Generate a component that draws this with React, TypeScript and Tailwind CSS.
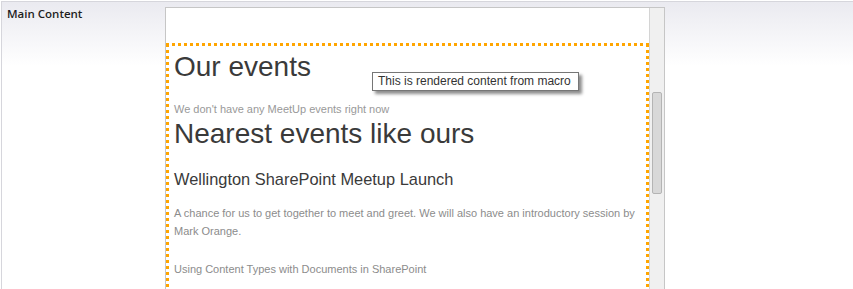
import React from 'react';

const App: React.FC = () => {
  return (
    <div className="relative h-[289px] overflow-hidden bg-white font-['Liberation_Sans',Arial,sans-serif]">
      <div className="mt-[1px] ml-[1px] h-[300px] border-t border-l border-[#d6d6dc] bg-[linear-gradient(to_bottom,#eaeaf0_0px,#ffffff_64px)]">
        <div className="flex items-start">
          {/* Label column */}
          <div className="w-[163px] shrink-0 pl-[5px] pt-[4px] font-['Open_Sans',sans-serif] text-[11.5px] leading-[15px] font-semibold text-[#1e1e1e]">
            Main Content
          </div>

          {/* Editor frame */}
          <div className="mt-[5px] flex h-[300px] w-[500px] border border-[#c6c6c6] bg-white">
            <div className="flex-1 pt-[35px]">
              <div className="h-[300px] border-[3px] border-dotted border-[#ffa500] pl-[5px] pr-[8px] pt-[5px]">
                <h1 className="text-[28px] leading-[32px] text-[#3a3a3a]">Our events</h1>
                <p className="mt-[17px] text-[11px] leading-[18px] text-[#999999]">
                  We don't have any MeetUp events right now
                </p>
                <h2 className="text-[28px] leading-[32px] text-[#3a3a3a]">Nearest events like ours</h2>
                <h3 className="mt-[19px] text-[16.4px] leading-[20px] text-[#3a3a3a]">
                  Wellington SharePoint Meetup Launch
                </h3>
                <p className="mt-[15px] text-[11px] leading-[18px] text-[#8c8c8c]">
                  A chance for us to get together to meet and greet. We will also have an introductory session by Mark Orange.
                </p>
                <p className="mt-[20px] text-[11px] leading-[18px] text-[#8c8c8c]">
                  Using Content Types with Documents in SharePoint
                </p>
              </div>
            </div>

            {/* Scrollbar */}
            <div className="w-[15px] shrink-0 border-l border-[#d4d4d4] bg-[#f0f0f0]">
              <div className="mt-[84px] ml-[2px] h-[102px] w-[10px] rounded-[2px] border border-[#b4b4b4] bg-[#d8d8d8]"></div>
            </div>
          </div>
        </div>
      </div>

      {/* Tooltip */}
      <div className="absolute left-[372px] top-[72px] h-[19px] w-[207px] border border-[#767676] bg-white pl-[5px] text-[12px] leading-[17px] text-[#333333] shadow-[3px_3px_3px_rgba(0,0,0,0.45)]">
        This is rendered content from macro
      </div>
    </div>
  );
};

export default App;
